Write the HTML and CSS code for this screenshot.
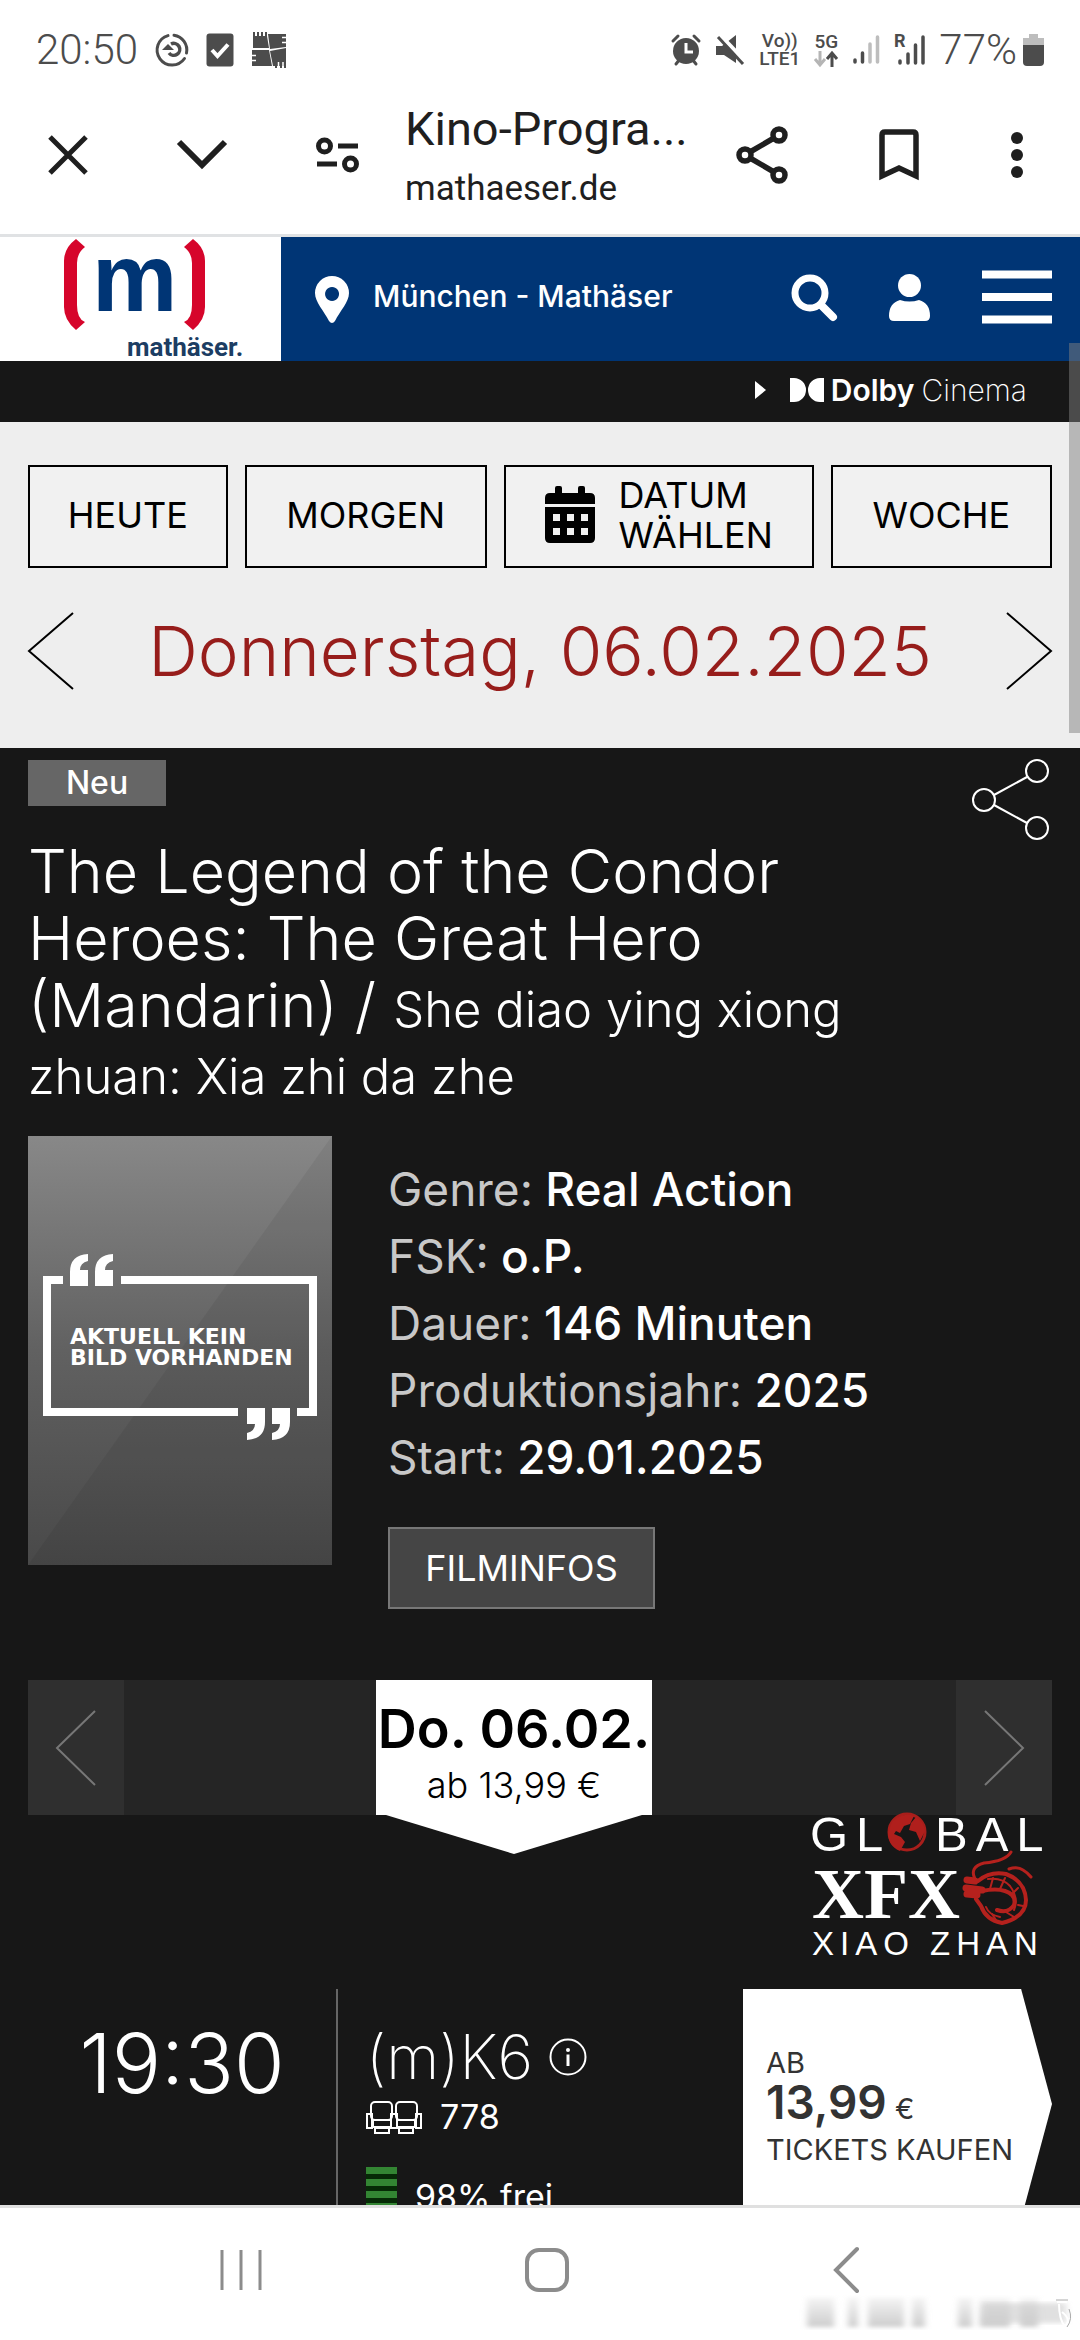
FILE: index.html
```html
<!DOCTYPE html>
<html lang="de">
<head>
<meta charset="utf-8">
<meta name="viewport" content="width=device-width, initial-scale=1">
<title>Kino-Programm – Mathäser</title>
<link rel="stylesheet" href="styles.css">
</head>
<body>
<div class="status-bar">
  <div class="status-left">
    <span class="clock">20:50</span>
    <svg width="34" height="34" viewBox="0 0 34 34" fill="none" stroke="#4c4c4c" stroke-width="3"><path d="M13 2.600A15 15 0 1 0 29.500 25.500M19 2.200A15 15 0 0 1 31.500 20" stroke-linecap="round"/><path d="M16 11a6 6 0 1 1-2 9" stroke-width="3.500"/><path d="M7 17l6-6 6 6z" fill="#4c4c4c" stroke="none"/></svg>
    <svg width="28" height="34" viewBox="0 0 28 34"><rect x=".5" y=".5" width="27" height="33" rx="3" fill="#4c4c4c"/><path d="M6 17l5.500 6L22 11.500" fill="none" stroke="#fff" stroke-width="4"/></svg>
    <svg width="36" height="36" viewBox="0 0 36 36"><path d="M2 4h14l2 12H2zM17 2h18v13l-16 2zM1 18h17l3 16H1zM19 19l16-3v18H22z" fill="#4c4c4c"/><path d="M3 0v5M7 0v5M11 0v5M15 0v5M25 36v-3M30 36v-3M34 36v-3" stroke="#4c4c4c" stroke-width="2"/><path d="M31 5.500h5M31 10.500h5M0 23.500h5M0 28.500h5M27.500 35v-5M32 35v-5" stroke="#fff" stroke-width="1.500"/></svg>
  </div>
  <div class="status-right">
    <svg width="30" height="32" viewBox="0 0 30 32"><circle cx="15" cy="17" r="13" fill="#4c4c4c"/><path d="M15 9v9h7" fill="none" stroke="#fff" stroke-width="3"/><path d="M2 7l5-5M28 7l-5-5M5 30l4-5M25 30l-4-5" stroke="#4c4c4c" stroke-width="3" stroke-linecap="round"/></svg>
    <svg width="30" height="32" viewBox="0 0 30 32"><path d="M1 12h6L21 1v28L9 21H1z" fill="#4c4c4c"/><path d="M4 0l26 27" stroke="#fff" stroke-width="4"/><path d="M3 3l25 27" stroke="#4c4c4c" stroke-width="3"/></svg>
    <span class="net volte">Vo))<br>LTE1</span>
    <span class="net fiveg">5G<svg width="24" height="16" viewBox="0 0 24 16" fill="none" stroke-width="3"><path d="M6 0v13M1 8l5 6 5-6" stroke="#b5b5b5"/><path d="M18 16V3M13 8l5-6 5 6" stroke="#4c4c4c"/></svg></span>
    <svg width="28" height="32" viewBox="0 0 28 32" stroke="#4c4c4c" stroke-width="3.500" stroke-linecap="round"><path d="M3 26v2M10.500 19v9"/><path d="M18 10v18M25.500 3v25" stroke="#bdbdbd"/></svg>
    <svg width="31" height="34" viewBox="0 0 31 34" stroke="#4c4c4c" stroke-width="3.500" stroke-linecap="round"><path d="M6 28v2M14 21v9M21.500 12v18M29 4v26"/><text x="0" y="14" class="roam" stroke="none">R</text></svg>
    <span class="clock">77%</span>
    <svg width="21" height="32" viewBox="0 0 21 32"><path d="M6 0h9v4h6v8H0V4h6z" fill="#bdbdbd"/><path d="M0 11h21v17q0 4-4 4H4q-4 0-4-4z" fill="#4c4c4c"/></svg>
  </div>
</div>

<header class="toolbar">
  <div class="tools tools-start">
    <button class="icon-btn" aria-label="Schließen"><svg width="40" height="40" viewBox="0 0 40 40"><path d="M2 2l36 36M38 2L2 38" stroke="#1f1f1f" stroke-width="5"/></svg></button>
    <button class="icon-btn" aria-label="Minimieren"><svg width="50" height="30" viewBox="0 0 50 30"><path d="M2 2l23 23L48 2" fill="none" stroke="#1f1f1f" stroke-width="6"/></svg></button>
    <button class="icon-btn" aria-label="Seiteninfo"><svg width="43" height="36" viewBox="0 0 43 36" fill="none" stroke="#1f1f1f" stroke-width="5"><circle cx="8.500" cy="9" r="6"/><path d="M22 9h20M1 27h20"/><circle cx="34.500" cy="27" r="6"/></svg></button>
  </div>
  <div class="page-id">
    <div class="page-title">Kino-Progra...</div>
    <div class="page-host">mathaeser.de</div>
  </div>
  <div class="tools tools-end">
    <button class="icon-btn" aria-label="Teilen"><svg width="52" height="58" viewBox="0 0 52 58" fill="none" stroke="#1f1f1f" stroke-width="5.500"><circle cx="43" cy="9" r="6"/><circle cx="9" cy="29" r="6"/><circle cx="43" cy="49" r="6"/><path d="M14 26l24-14M14 32l24 14"/></svg></button>
    <button class="icon-btn" aria-label="Lesezeichen"><svg width="40" height="52" viewBox="0 0 40 52"><path d="M3 47V6q0-3 3-3h28q3 0 3 3v41l-17-8z" fill="none" stroke="#1f1f1f" stroke-width="5.500"/></svg></button>
    <button class="icon-btn" aria-label="Mehr"><svg width="14" height="48" viewBox="0 0 14 48" fill="#1f1f1f"><circle cx="7" cy="7" r="6"/><circle cx="7" cy="24" r="6"/><circle cx="7" cy="41" r="6"/></svg></button>
  </div>
</header>

<main class="view">
  <div class="scrollbar"></div>
  <div class="site-head">
    <a class="logo" href="#" aria-label="Mathäser">
      <svg width="190" height="124" viewBox="0 0 190 124">
        <path d="M15 2l9 8q-8 6-8 16v42q0 14 8 17l-9 8Q3 83 3 70V24Q3 11 15 2z M132 2l-9 8q8 6 8 16v42q0 14-8 17l9 8q12-10 12-23V24q0-13-12-22z" fill="#d6052b"/>
        <text x="31" y="74" class="logo-m">m</text>
        <text x="66" y="119" class="logo-name">mathäser.</text>
      </svg>
    </a>
    <a class="location" href="#">
      <svg width="34" height="47" viewBox="0 0 34 47"><path fill-rule="evenodd" d="M17 0a17 17 0 0 1 17 17c0 9-9 18-14 28q-3 4-6 0C9 35 0 26 0 17A17 17 0 0 1 17 0zm0 11a7 7 0 1 0 .1 0z" fill="#fff"/></svg>
      <span>München - Mathäser</span>
    </a>
    <nav class="site-tools">
      <button class="icon-btn" aria-label="Suche"><svg width="46" height="47" viewBox="0 0 46 47" fill="none" stroke="#fff"><circle cx="19" cy="19" r="15" stroke-width="7"/><path d="M31 32l11 11" stroke-width="8" stroke-linecap="round"/></svg></button>
      <button class="icon-btn" aria-label="Konto"><svg width="41" height="47" viewBox="0 0 41 47" fill="#fff"><circle cx="20.500" cy="11.500" r="11.500"/><path d="M11 26q9.500 3 19 0 11 3 11 16 0 5-5 5H5q-5 0-5-5 0-13 11-16z"/></svg></button>
      <button class="icon-btn" aria-label="Menü"><svg width="70" height="54" viewBox="0 0 70 54"><path d="M0 4.500h70M0 27h70M0 49.500h70" stroke="#fff" stroke-width="8"/></svg></button>
    </nav>
  </div>
  <a class="promo" href="#">
    <svg width="11" height="18" viewBox="0 0 11 18"><path d="M0 0l11 9-11 9z" fill="#fff"/></svg>
    <svg width="34" height="24" viewBox="0 0 34 24" fill="#fff"><path d="M0 0h4a12 12 0 0 1 0 24H0zM34 0h-4a12 12 0 0 0 0 24h4z"/></svg>
    <span class="dolby">Dolby</span>
    <span class="cinema">Cinema</span>
  </a>

  <section class="day-picker">
    <div class="day-buttons">
      <button class="day-btn day-today">HEUTE</button>
      <button class="day-btn day-tomorrow">MORGEN</button>
      <button class="day-btn day-pick">
        <svg width="50" height="57" viewBox="0 0 50 57"><path d="M10 7V2q0-2 2-2h3q2 0 2 2v5h16V2q0-2 2-2h3q2 0 2 2v5h5q5 0 5 5v6H0v-6q0-5 5-5z"/><path fill-rule="evenodd" d="M0 21h50v31q0 5-5 5H5q-5 0-5-5zM8 28v7h7v-7zM22 28v7h7v-7zM36 28v7h7v-7zM8 42v7h7v-7zM22 42v7h7v-7zM36 42v7h7v-7z"/></svg>
        <span>DATUM<br>WÄHLEN</span>
      </button>
      <button class="day-btn day-week">WOCHE</button>
    </div>
    <div class="day-current">
      <button class="icon-btn" aria-label="Vorheriger Tag"><svg width="46" height="78" viewBox="0 0 46 78"><path d="M45 1L1 39l44 38" fill="none" stroke="#000" stroke-width="2"/></svg></button>
      <h1 class="day-name">Donnerstag, 06.02.2025</h1>
      <button class="icon-btn" aria-label="Nächster Tag"><svg width="46" height="78" viewBox="0 0 46 78"><path d="M1 1l44 38L1 77" fill="none" stroke="#000" stroke-width="2"/></svg></button>
    </div>
  </section>

  <article class="film">
    <div class="film-top">
      <span class="badge">Neu</span>
      <button class="icon-btn film-share" aria-label="Film teilen"><svg width="80" height="80" viewBox="0 0 80 80" fill="none" stroke="#fff" stroke-width="2"><circle cx="65" cy="11" r="11"/><circle cx="12" cy="40" r="11"/><circle cx="65" cy="68" r="11"/><path d="M22 35l33-18M22 45l33 18"/></svg></button>
    </div>
    <h2 class="film-title">The Legend of the Condor<br>Heroes: The Great Hero<br>(Mandarin) / <small>She diao ying xiong<br>zhuan: Xia zhi da zhe</small></h2>
    <div class="film-body">
      <svg class="poster" width="304" height="429" viewBox="0 0 304 429">
        <defs><linearGradient id="shade" x1="0" y1="0" x2="0" y2="1"><stop offset="0" stop-color="#888"/><stop offset=".5" stop-color="#616161"/><stop offset="1" stop-color="#494949"/></linearGradient></defs>
        <rect width="304" height="429" fill="url(#shade)"/>
        <path d="M304 0v429H0z" fill="#000" opacity=".06"/>
        <path d="M35 144H19v132h191M269 276h16V144H93" fill="none" stroke="#fff" stroke-width="8"/>
        <path d="M42 150v-14q0-17 18-18v7q-8 2-8 9h8v16z" fill="#fff"/>
        <path d="M67 150v-14q0-17 18-18v7q-8 2-8 9h8v16zM237 272v14q0 17-18 18v-7q8-2 8-9h-8v-16zM262 272v14q0 17-18 18v-7q8-2 8-9h-8v-16z" fill="#fff"/>
        <text x="42" y="208" class="poster-text">AKTUELL KEIN</text>
        <text x="42" y="229" class="poster-text">BILD VORHANDEN</text>
      </svg>
      <div class="film-info">
        <dl class="facts">
          <div><dt>Genre:</dt> <dd>Real Action</dd></div>
          <div><dt>FSK:</dt> <dd>o.P.</dd></div>
          <div><dt>Dauer:</dt> <dd>146 Minuten</dd></div>
          <div><dt>Produktionsjahr:</dt> <dd>2025</dd></div>
          <div><dt>Start:</dt> <dd>29.01.2025</dd></div>
        </dl>
        <button class="info-btn">FILMINFOS</button>
      </div>
    </div>

    <div class="carousel">
      <button class="slide-btn" aria-label="Zurück"><svg width="40" height="76" viewBox="0 0 40 76"><path d="M39 1L1 38l38 37" fill="none" stroke="#777" stroke-width="2"/></svg></button>
      <button class="date-tab"><strong>Do. 06.02.</strong><span>ab 13,99 €</span></button>
      <button class="slide-btn" aria-label="Weiter"><svg width="40" height="76" viewBox="0 0 40 76"><path d="M1 1l38 37L1 75" fill="none" stroke="#777" stroke-width="2"/></svg></button>
    </div>

    <svg class="sponsor" width="240" height="174" viewBox="0 0 240 174">
      <text x="-2" y="36" class="sp-sans sp-large">GL</text>
      <text x="123" y="36" class="sp-sans sp-large">BAL</text>
      <circle cx="95" cy="17" r="18" fill="#171717" stroke="#a81e1b" stroke-width="3"/>
      <path d="M80 7Q90-3 102 1l-4 8-6 2-4 7-4-2-2 3 7 3 4 5-5 9q-12-5-12-18zM104 2q8 5 9 14l-5 10-4-9-7-2 2-7z" fill="#b01f1c"/>
      <text x="0" y="103" class="sp-serif">XFX</text>
      <text x="0" y="140" class="sp-sans sp-small">XIAO ZHAN</text>
      <g fill="none" stroke="#b5211d" stroke-linecap="round" stroke-linejoin="round">
        <path d="M163 64q-6-12 9-16 22-2 27-11M197 54q8-3 14 1 5 3 8 7" stroke-width="3"/>
        <path d="M166 66q12-10 28-7 19 7 20 26 0 17-24 23-16-3-21-17l-5-7" stroke-width="4"/>
        <path d="M170 76q14-3 23 0 12 4 9 14-6 9-17 5" stroke-width="4"/>
        <path d="M176 64q14-2 22 7 9 12 4 24M174 92q3 8 14 10" stroke-width="2"/>
        <path d="M178 74l3-11M188 74l5-11M199 80l7-7M180 99l4 6M194 97l8 5M206 90l5 1" stroke-width="2"/>
        <path d="M155 65l8 1M154 73l16 2M155 79l10 1" stroke-width="7"/>
      </g>
    </svg>

    <div class="show">
      <div class="show-time">19:30</div>
      <div class="show-hall">
        <div class="hall-name">(m)K6 <svg width="38" height="38" viewBox="0 0 38 38"><circle cx="19" cy="19" r="17.500" fill="none" stroke="#fff" stroke-width="2"/><circle cx="19" cy="12" r="2" fill="#fff"/><path d="M19 16.500V28" stroke="#fff" stroke-width="3"/></svg></div>
        <div class="hall-seats"><svg width="56" height="33" viewBox="0 0 56 33" fill="none" stroke="#fff" stroke-width="2"><rect x="5" y="1" width="21" height="18" rx="4"/><rect x="30" y="1" width="21" height="18" rx="4"/><path d="M7 19h18v7H7zM31 19h18v7H31zM1 13h5v14H1zM50 13h5v14h-5zM25 13h6v14h-6zM9 27h14v5H9zM33 27h14v5H33z"/></svg> 778</div>
        <div class="hall-free"><span class="level"></span>98% frei</div>
      </div>
      <a class="ticket" href="#">
        <span class="t-small">AB</span>
        <span class="t-price"><b>13,99</b> €</span>
        <span class="t-buy">TICKETS KAUFEN</span>
      </a>
    </div>
  </article>
</main>

<nav class="system-nav">
  <button class="icon-btn" aria-label="Letzte Apps"><svg width="42" height="44" viewBox="0 0 42 44"><path d="M2 2v40M21 2v40M40 2v40" stroke="#8c8c8c" stroke-width="3"/></svg></button>
  <button class="icon-btn" aria-label="Startseite"><svg width="44" height="44" viewBox="0 0 44 44"><rect x="2" y="2" width="40" height="40" rx="12" fill="none" stroke="#8c8c8c" stroke-width="4"/></svg></button>
  <button class="icon-btn" aria-label="Zurück"><svg width="28" height="46" viewBox="0 0 28 46"><path d="M25 2L4 23l21 21" fill="none" stroke="#8c8c8c" stroke-width="4" stroke-linecap="round"/></svg></button>
  <svg class="smudge" width="270" height="40" viewBox="0 0 270 40" aria-hidden="true">
    <defs><filter id="soft"><feGaussianBlur stdDeviation="3 2"/></filter><linearGradient id="fall" x1="0" y1="0" x2="0" y2="1"><stop offset="0" stop-color="#ccc" stop-opacity=".2"/><stop offset="1" stop-color="#ccc"/></linearGradient></defs>
    <path d="M5 4h27v29H5zM46 4h10v29H46zM66 4h36v29H66zM110 4h13v29h-13zM156 4h14v29h-14zM178 4h30v29h-30zM218 4h18v29h-18z" fill="url(#fall)" filter="url(#soft)"/>
    <path d="M180 9h84v20h-84z" fill="#ccc" opacity=".6" filter="url(#soft)"/>
    <path d="M255 8h10M257 10q0 15 6 23M260 18q10 8 3 14" fill="none" stroke="#fff" stroke-width="2"/>
    <path d="M254 6h12M267 15q4 10-2 18" fill="none" stroke="#aaa"/>
  </svg>
</nav>
</body>
</html>
```
FILE: styles.css
```css
* { box-sizing: border-box; }

body {
  margin: 0;
  height: 100vh;
  display: flex;
  flex-direction: column;
  overflow: hidden;
  background: #fff;
  color: #000;
  font-family: Inter, "Open Sans", sans-serif;
}

svg { display: block; flex: none; overflow: visible; }
a { color: inherit; text-decoration: none; }
button { font: inherit; color: inherit; border: 0; padding: 0; background: none; cursor: pointer; }
.icon-btn { display: block; flex: none; }

/* phone status bar */
.status-bar {
  display: flex;
  justify-content: space-between;
  align-items: center;
  height: 100px;
  padding: 0 36px;
  color: #4c4c4c;
  font-family: Roboto, sans-serif;
}
.status-left { display: flex; align-items: center; gap: 17px; }
.status-right { display: flex; align-items: center; gap: 14px; }
.clock { font-size: 42px; font-weight: 300; line-height: 48px; }
.status-right .clock { margin-right: -8px; }
.net { font-weight: 500; font-size: 19px; line-height: 18px; text-align: center; }
.fiveg { display: flex; flex-direction: column; align-items: center; }
.roam { font: 700 18px Roboto, sans-serif; fill: #4c4c4c; }

/* in-app browser toolbar */
.toolbar {
  display: flex;
  align-items: center;
  height: 137px;
  padding: 0 56px 24px 48px;
  border-bottom: 3px solid #e0e2e4;
  color: #1f1f1f;
  font-family: Roboto, sans-serif;
}
.tools { display: flex; align-items: center; }
.tools-start { gap: 89px; }
.tools-end { gap: 91px; }
.page-id { flex: 1; min-width: 0; margin: 8px 0 0 46px; }
.page-title { font-size: 47px; line-height: 60px; white-space: nowrap; }
.page-host { font-size: 35px; line-height: 60px; }

/* page view */
.view { position: relative; flex: 1; min-height: 0; overflow: hidden; background: #171717; }
.scrollbar { position: absolute; right: 0; top: 106px; width: 11px; height: 390px; background: rgba(128, 128, 128, .5); z-index: 2; }

.site-head { display: flex; align-items: center; height: 124px; background: #003575; color: #fff; }
.logo { width: 281px; height: 124px; padding-left: 61px; background: #fff; }
.logo-m { font: 700 96px "Liberation Sans", sans-serif; fill: #003575; }
.logo-name { font: 700 26px Roboto, sans-serif; fill: #1c3d63; }
.location { flex: 1; display: flex; align-items: center; gap: 24px; padding-left: 34px; font-size: 30px; font-weight: 500; line-height: 36px; }
.location span { padding-bottom: 6px; }
.site-tools { display: flex; align-items: center; gap: 52px; padding: 0 28px 4px 0; }

.promo { display: flex; align-items: center; justify-content: flex-end; height: 61px; padding: 0 53px 4px 0; color: #fff; font-size: 30px; line-height: 40px; }
.promo svg + svg { margin: 0 7px 0 24px; }
.dolby { font-weight: 600; }
.cinema { font-weight: 200; margin-left: 7px; }

/* day picker */
.day-picker { padding: 43px 28px 58px; background: #eee; }
.day-buttons { display: flex; gap: 17px; height: 103px; }
.day-btn { flex: 1 1 0; display: flex; align-items: center; justify-content: center; gap: 24px; padding-bottom: 4px; border: 2px solid #000; background: #f1f1f1; font-size: 36px; line-height: 40px; text-align: left; }
.day-today { flex-grow: 199; }
.day-tomorrow { flex-grow: 242; }
.day-pick { flex-grow: 311; }
.day-week { flex-grow: 221; }
.day-current { display: flex; align-items: center; justify-content: space-between; margin-top: 44px; }
.day-name { margin: 0; color: #971d1b; font-size: 69px; font-weight: 300; line-height: 78px; }

/* film */
.film { padding: 12px 28px 0; color: #fff; }
.film-top { display: flex; justify-content: space-between; align-items: flex-start; height: 78px; }
.badge { width: 138px; background: #666; text-align: center; font-size: 32px; font-weight: 500; line-height: 46px; }
.film-title { margin: 0; font-size: 61px; font-weight: 300; line-height: 67px; }
.film-title small { font-size: 49px; font-weight: 300; line-height: 48px; }
.film-body { display: flex; gap: 56px; margin-top: 30px; }
.film-info { padding-top: 20px; }
.facts { margin: 0; font-size: 46px; font-weight: 500; line-height: 67px; }
.facts dt, .facts dd { display: inline; margin: 0; }
.facts dt { color: #c8c8c8; font-weight: 400; }
.info-btn { width: 267px; height: 82px; margin-top: 36px; border: 2px solid #777; background: #454545; font-size: 36px; }
.poster-text { font: 700 22px "DejaVu Sans", sans-serif; fill: #fff; }

.carousel { display: flex; height: 135px; margin-top: 71px; background: #252525; }
.slide-btn { display: flex; align-items: center; justify-content: center; width: 96px; background: #2f2f2f; }
.date-tab { position: relative; width: 276px; margin: 0 auto 0 252px; padding-top: 10px; background: #fff; color: #000; }
.date-tab::after { content: ""; position: absolute; top: 100%; left: 10px; right: 10px; height: 39px; background: #fff; clip-path: polygon(0 0, 100% 0, 50% 100%); }
.date-tab strong { display: block; font-size: 54px; font-weight: 600; line-height: 64px; }
.date-tab span { display: block; font-size: 36px; font-weight: 300; line-height: 48px; }

.sponsor { margin-left: auto; }
.sp-sans { font-family: "Liberation Sans", sans-serif; fill: #fff; }
.sp-large { font-size: 49px; letter-spacing: 8px; }
.sp-small { font-size: 33px; letter-spacing: 6px; }
.sp-serif { font: 700 72px "Liberation Serif", serif; fill: #fff; }

/* showing */
.show { display: flex; height: 230px; }
.show-time { width: 310px; padding-top: 27px; border-right: 2px solid #666; text-align: center; font-size: 82px; font-weight: 300; line-height: 96px; }
.show-hall { flex: 1; padding: 36px 0 0 28px; }
.hall-name { display: flex; align-items: center; gap: 16px; font-size: 61px; font-weight: 200; line-height: 64px; }
.hall-seats { display: flex; align-items: center; gap: 18px; font-size: 34px; line-height: 56px; }
.hall-free { display: flex; gap: 18px; margin-top: 22px; font-size: 34px; line-height: 60px; }
.level { width: 31px; height: 60px; background: repeating-linear-gradient(#338533 0 7px, #062a06 7px 12px); }
.ticket { width: 309px; padding: 56px 0 0 23px; background: #fff; color: #333; font-size: 29px; clip-path: polygon(0 0, 90% 0, 100% 50%, 90% 100%, 0 100%); }
.ticket span { display: block; white-space: nowrap; }
.ticket .t-small { line-height: 36px; }
.ticket .t-price { line-height: 42px; }
.ticket .t-price b { font-size: 46px; font-weight: 600; }
.ticket .t-buy { line-height: 40px; }

/* phone navigation */
.system-nav { position: relative; display: flex; align-items: center; justify-content: space-between; height: 135px; padding: 0 220px 8px; border-top: 3px solid #e0e0e0; background: #fff; }
.smudge { position: absolute; right: 8px; bottom: 6px; }
```
